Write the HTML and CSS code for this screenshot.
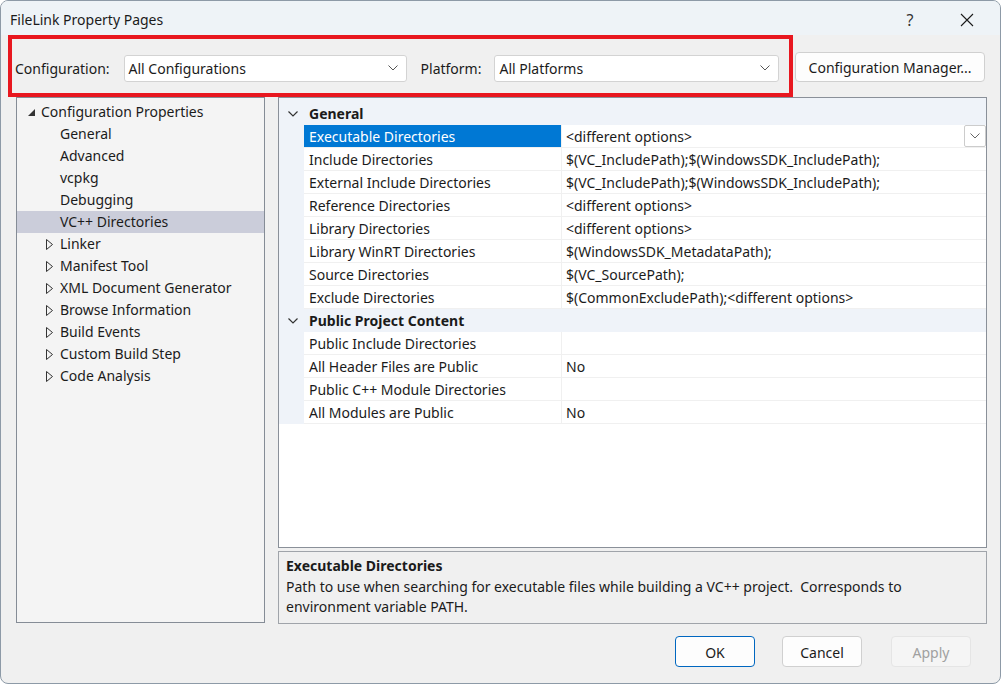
FILE: index.html
```html
<!DOCTYPE html>
<html lang="en">
<head>
<meta charset="utf-8">
<title>FileLink Property Pages</title>
<link rel="stylesheet" href="styles.css">
</head>
<body>
<div class="window">
  <div class="titlebar">
    <span class="title">FileLink Property Pages</span>
    <div class="caption">
      <span class="cap-btn help">?</span>
      <span class="cap-btn close">
        <svg width="14" height="14" viewBox="0 0 14 14"><path d="M1 1 L13 13 M13 1 L1 13" stroke="#1b1b1b" stroke-width="1.1" fill="none"/></svg>
      </span>
    </div>
  </div>

  <div class="body">
    <div class="toolbar">
      <div class="config-group">
        <span class="label">Configuration:</span>
        <div class="combo combo-config">
          <span>All Configurations</span>
          <svg class="chev" width="10" height="6" viewBox="0 0 10 6"><path d="M0.5 0.5 L5 5 L9.5 0.5" stroke="#555" stroke-width="1" fill="none"/></svg>
        </div>
        <span class="label label-platform">Platform:</span>
        <div class="combo combo-platform">
          <span>All Platforms</span>
          <svg class="chev" width="10" height="6" viewBox="0 0 10 6"><path d="M0.5 0.5 L5 5 L9.5 0.5" stroke="#555" stroke-width="1" fill="none"/></svg>
        </div>
      </div>
      <button class="btn btn-manager">Configuration Manager...</button>
    </div>

    <div class="main">
      <div class="tree">
        <div class="node root"><span class="exp exp-open"></span>Configuration Properties</div>
        <div class="node leaf">General</div>
        <div class="node leaf">Advanced</div>
        <div class="node leaf">vcpkg</div>
        <div class="node leaf">Debugging</div>
        <div class="node leaf selected">VC++ Directories</div>
        <div class="node child"><svg class="exp-closed" width="8" height="11" viewBox="0 0 8 11"><path d="M0.5 0.5 L6.5 5.5 L0.5 10.5 Z" stroke="#333" stroke-width="1" fill="none" stroke-linejoin="miter"/></svg>Linker</div>
        <div class="node child"><svg class="exp-closed" width="8" height="11" viewBox="0 0 8 11"><path d="M0.5 0.5 L6.5 5.5 L0.5 10.5 Z" stroke="#333" stroke-width="1" fill="none" stroke-linejoin="miter"/></svg>Manifest Tool</div>
        <div class="node child"><svg class="exp-closed" width="8" height="11" viewBox="0 0 8 11"><path d="M0.5 0.5 L6.5 5.5 L0.5 10.5 Z" stroke="#333" stroke-width="1" fill="none" stroke-linejoin="miter"/></svg>XML Document Generator</div>
        <div class="node child"><svg class="exp-closed" width="8" height="11" viewBox="0 0 8 11"><path d="M0.5 0.5 L6.5 5.5 L0.5 10.5 Z" stroke="#333" stroke-width="1" fill="none" stroke-linejoin="miter"/></svg>Browse Information</div>
        <div class="node child"><svg class="exp-closed" width="8" height="11" viewBox="0 0 8 11"><path d="M0.5 0.5 L6.5 5.5 L0.5 10.5 Z" stroke="#333" stroke-width="1" fill="none" stroke-linejoin="miter"/></svg>Build Events</div>
        <div class="node child"><svg class="exp-closed" width="8" height="11" viewBox="0 0 8 11"><path d="M0.5 0.5 L6.5 5.5 L0.5 10.5 Z" stroke="#333" stroke-width="1" fill="none" stroke-linejoin="miter"/></svg>Custom Build Step</div>
        <div class="node child"><svg class="exp-closed" width="8" height="11" viewBox="0 0 8 11"><path d="M0.5 0.5 L6.5 5.5 L0.5 10.5 Z" stroke="#333" stroke-width="1" fill="none" stroke-linejoin="miter"/></svg>Code Analysis</div>
      </div>

      <div class="right">
        <div class="grid">
          <div class="grid-top"></div>
          <div class="cat">
            <span class="gutter"><svg width="10" height="6" viewBox="0 0 10 6"><path d="M0.5 0.5 L5 5 L9.5 0.5" stroke="#333" stroke-width="1.2" fill="none"/></svg></span>
            <span class="cat-name">General</span>
          </div>
          <div class="prop">
            <span class="gutter"></span>
            <span class="name active">Executable Directories</span>
            <span class="value">&lt;different options&gt;
              <span class="drop"><svg width="10" height="6" viewBox="0 0 10 6"><path d="M0.5 0.5 L5 5 L9.5 0.5" stroke="#666" stroke-width="1" fill="none"/></svg></span>
            </span>
          </div>
          <div class="prop"><span class="gutter"></span><span class="name">Include Directories</span><span class="value">$(VC_IncludePath);$(WindowsSDK_IncludePath);</span></div>
          <div class="prop"><span class="gutter"></span><span class="name">External Include Directories</span><span class="value">$(VC_IncludePath);$(WindowsSDK_IncludePath);</span></div>
          <div class="prop"><span class="gutter"></span><span class="name">Reference Directories</span><span class="value">&lt;different options&gt;</span></div>
          <div class="prop"><span class="gutter"></span><span class="name">Library Directories</span><span class="value">&lt;different options&gt;</span></div>
          <div class="prop"><span class="gutter"></span><span class="name">Library WinRT Directories</span><span class="value">$(WindowsSDK_MetadataPath);</span></div>
          <div class="prop"><span class="gutter"></span><span class="name">Source Directories</span><span class="value">$(VC_SourcePath);</span></div>
          <div class="prop"><span class="gutter"></span><span class="name">Exclude Directories</span><span class="value">$(CommonExcludePath);&lt;different options&gt;</span></div>
          <div class="cat">
            <span class="gutter"><svg width="10" height="6" viewBox="0 0 10 6"><path d="M0.5 0.5 L5 5 L9.5 0.5" stroke="#333" stroke-width="1.2" fill="none"/></svg></span>
            <span class="cat-name">Public Project Content</span>
          </div>
          <div class="prop"><span class="gutter"></span><span class="name">Public Include Directories</span><span class="value"></span></div>
          <div class="prop"><span class="gutter"></span><span class="name">All Header Files are Public</span><span class="value">No</span></div>
          <div class="prop"><span class="gutter"></span><span class="name">Public C++ Module Directories</span><span class="value"></span></div>
          <div class="prop"><span class="gutter"></span><span class="name">All Modules are Public</span><span class="value">No</span></div>
        </div>
        <div class="desc">
          <div class="desc-title">Executable Directories</div>
          <div class="desc-text">Path to use when searching for executable files while building a VC++ project.&nbsp; Corresponds to environment variable PATH.</div>
        </div>
      </div>
    </div>

    <div class="footer">
      <button class="btn btn-ok">OK</button>
      <button class="btn btn-cancel">Cancel</button>
      <button class="btn btn-apply" disabled>Apply</button>
    </div>
  </div>
</div>
</body>
</html>
```

FILE: styles.css
```css
* { box-sizing: border-box; }

html, body {
  margin: 0;
  padding: 0;
  background: #ffffff;
}

body {
  font-family: "Noto Sans", "Open Sans", sans-serif;
  font-size: 14px;
  color: #1b1b1b;
}

.window {
  width: 1001px;
  height: 684px;
  border: 1px solid #8d9aa7;
  border-radius: 8px;
  overflow: hidden;
  background: #f0f0f0;
  display: flex;
  flex-direction: column;
}

/* caption */
.titlebar {
  height: 34px;
  flex: none;
  background: #eef3f7;
  display: flex;
  align-items: center;
  justify-content: space-between;
  padding-left: 9px;
}

.title {
  font-size: 14px;
  color: #1b1b1b;
  padding-top: 3px;
}

.caption {
  display: flex;
  align-items: center;
  height: 100%;
  padding-top: 3px;
}

.cap-btn {
  width: 46px;
  height: 100%;
  display: flex;
  align-items: center;
  justify-content: center;
}

.help {
  font-size: 16px;
  color: #333;
  margin-right: 11px;
}

.close {
  margin-right: 10px;
}

.body {
  flex: 1;
  display: flex;
  flex-direction: column;
}

/* configuration row */
.toolbar {
  height: 62px;
  flex: none;
  display: flex;
  align-items: center;
  padding-left: 7px;
}

.config-group {
  height: 62px;
  width: 785px;
  border: 4px solid #e8171f;
  display: flex;
  align-items: center;
  padding-left: 3px;
  padding-top: 4px;
}

.label {
  color: #1b1b1b;
  white-space: nowrap;
}

.combo {
  height: 27px;
  background: #ffffff;
  border: 1px solid #d3d3d3;
  border-radius: 3px;
  display: flex;
  align-items: center;
  justify-content: space-between;
  padding: 0 8px 0 4px;
}

.combo-config {
  width: 283px;
  margin-left: 14px;
}

.label-platform {
  margin-left: 14px;
}

.combo-platform {
  width: 285px;
  margin-left: 13px;
}

.chev { flex: none; }

.btn {
  font-family: inherit;
  font-size: 14px;
  color: #1b1b1b;
  background: #fdfdfd;
  border: 1px solid #d0d0d0;
  border-radius: 4px;
  padding: 0;
}

.btn-manager {
  margin-left: 2px;
  width: 190px;
  height: 30px;
  margin-top: 2px;
}

/* main split */
.main {
  height: 527px;
  flex: none;
  display: flex;
  padding-left: 15px;
}

.tree {
  width: 249px;
  height: 526px;
  background: #f4f4f4;
  border: 1px solid #858c96;
  padding-top: 3px;
}

.node {
  height: 22px;
  line-height: 22px;
  white-space: nowrap;
  position: relative;
}

.root { padding-left: 24px; }
.leaf { padding-left: 43px; }
.child { padding-left: 43px; }

.selected {
  background: #cbcdda;
}

.exp-open {
  position: absolute;
  left: 11px;
  top: 8px;
  width: 0;
  height: 0;
  border-left: 7px solid transparent;
  border-bottom: 7px solid #333;
}

.exp-closed {
  position: absolute;
  left: 29px;
  top: 6px;
}

.right {
  margin-left: 13px;
  width: 709px;
  display: flex;
  flex-direction: column;
  gap: 3px;
}

/* property grid */
.grid {
  height: 451px;
  background: #ffffff;
  border: 1px solid #8a9099;
  flex: none;
}

.grid-top {
  height: 4px;
  background: #eff3f9;
}

.cat, .prop {
  height: 23px;
  display: flex;
  align-items: stretch;
}

.cat {
  background: #eff3f9;
}

.gutter {
  width: 25px;
  flex: none;
  background: #eff3f9;
  display: flex;
  align-items: center;
  justify-content: center;
  padding-left: 3px;
}

.cat-name {
  font-weight: bold;
  line-height: 23px;
  padding-left: 5px;
}

.name, .value {
  line-height: 22px;
  padding-top: 1px;
  border-bottom: 1px solid #f0f0f0;
  white-space: nowrap;
}

.name {
  width: 258px;
  flex: none;
  padding-left: 5px;
  border-right: 1px solid #f0f0f0;
}

.name.active {
  background: #0078d4;
  color: #ffffff;
}

.value {
  flex: 1;
  padding-left: 4px;
  position: relative;
}

.drop {
  position: absolute;
  right: 0;
  top: 0;
  width: 22px;
  height: 22px;
  background: #ffffff;
  border: 1px solid #cccccc;
  border-radius: 2px;
  display: flex;
  align-items: center;
  justify-content: center;
}

/* description */
.desc {
  height: 74px;
  border: 1px solid #a0a4aa;
  background: #f0f0f0;
  padding: 3px 7px 0;
}

.desc-title {
  font-weight: bold;
  line-height: 22px;
}

.desc-text {
  line-height: 20px;
}

/* dialog buttons */
.footer {
  flex: 1;
  display: flex;
  justify-content: flex-end;
  align-items: flex-start;
  padding-top: 12px;
  padding-right: 29px;
  gap: 27px;
}

.footer .btn {
  width: 80px;
  height: 31px;
  padding-top: 1px;
}

.btn-ok {
  border-color: #0067c0;
}

.btn-cancel {
  margin-right: 2px;
}

.btn-apply {
  color: #a0a0a0;
  background: #f5f5f5;
  border-color: #e5e5e5;
}
```
